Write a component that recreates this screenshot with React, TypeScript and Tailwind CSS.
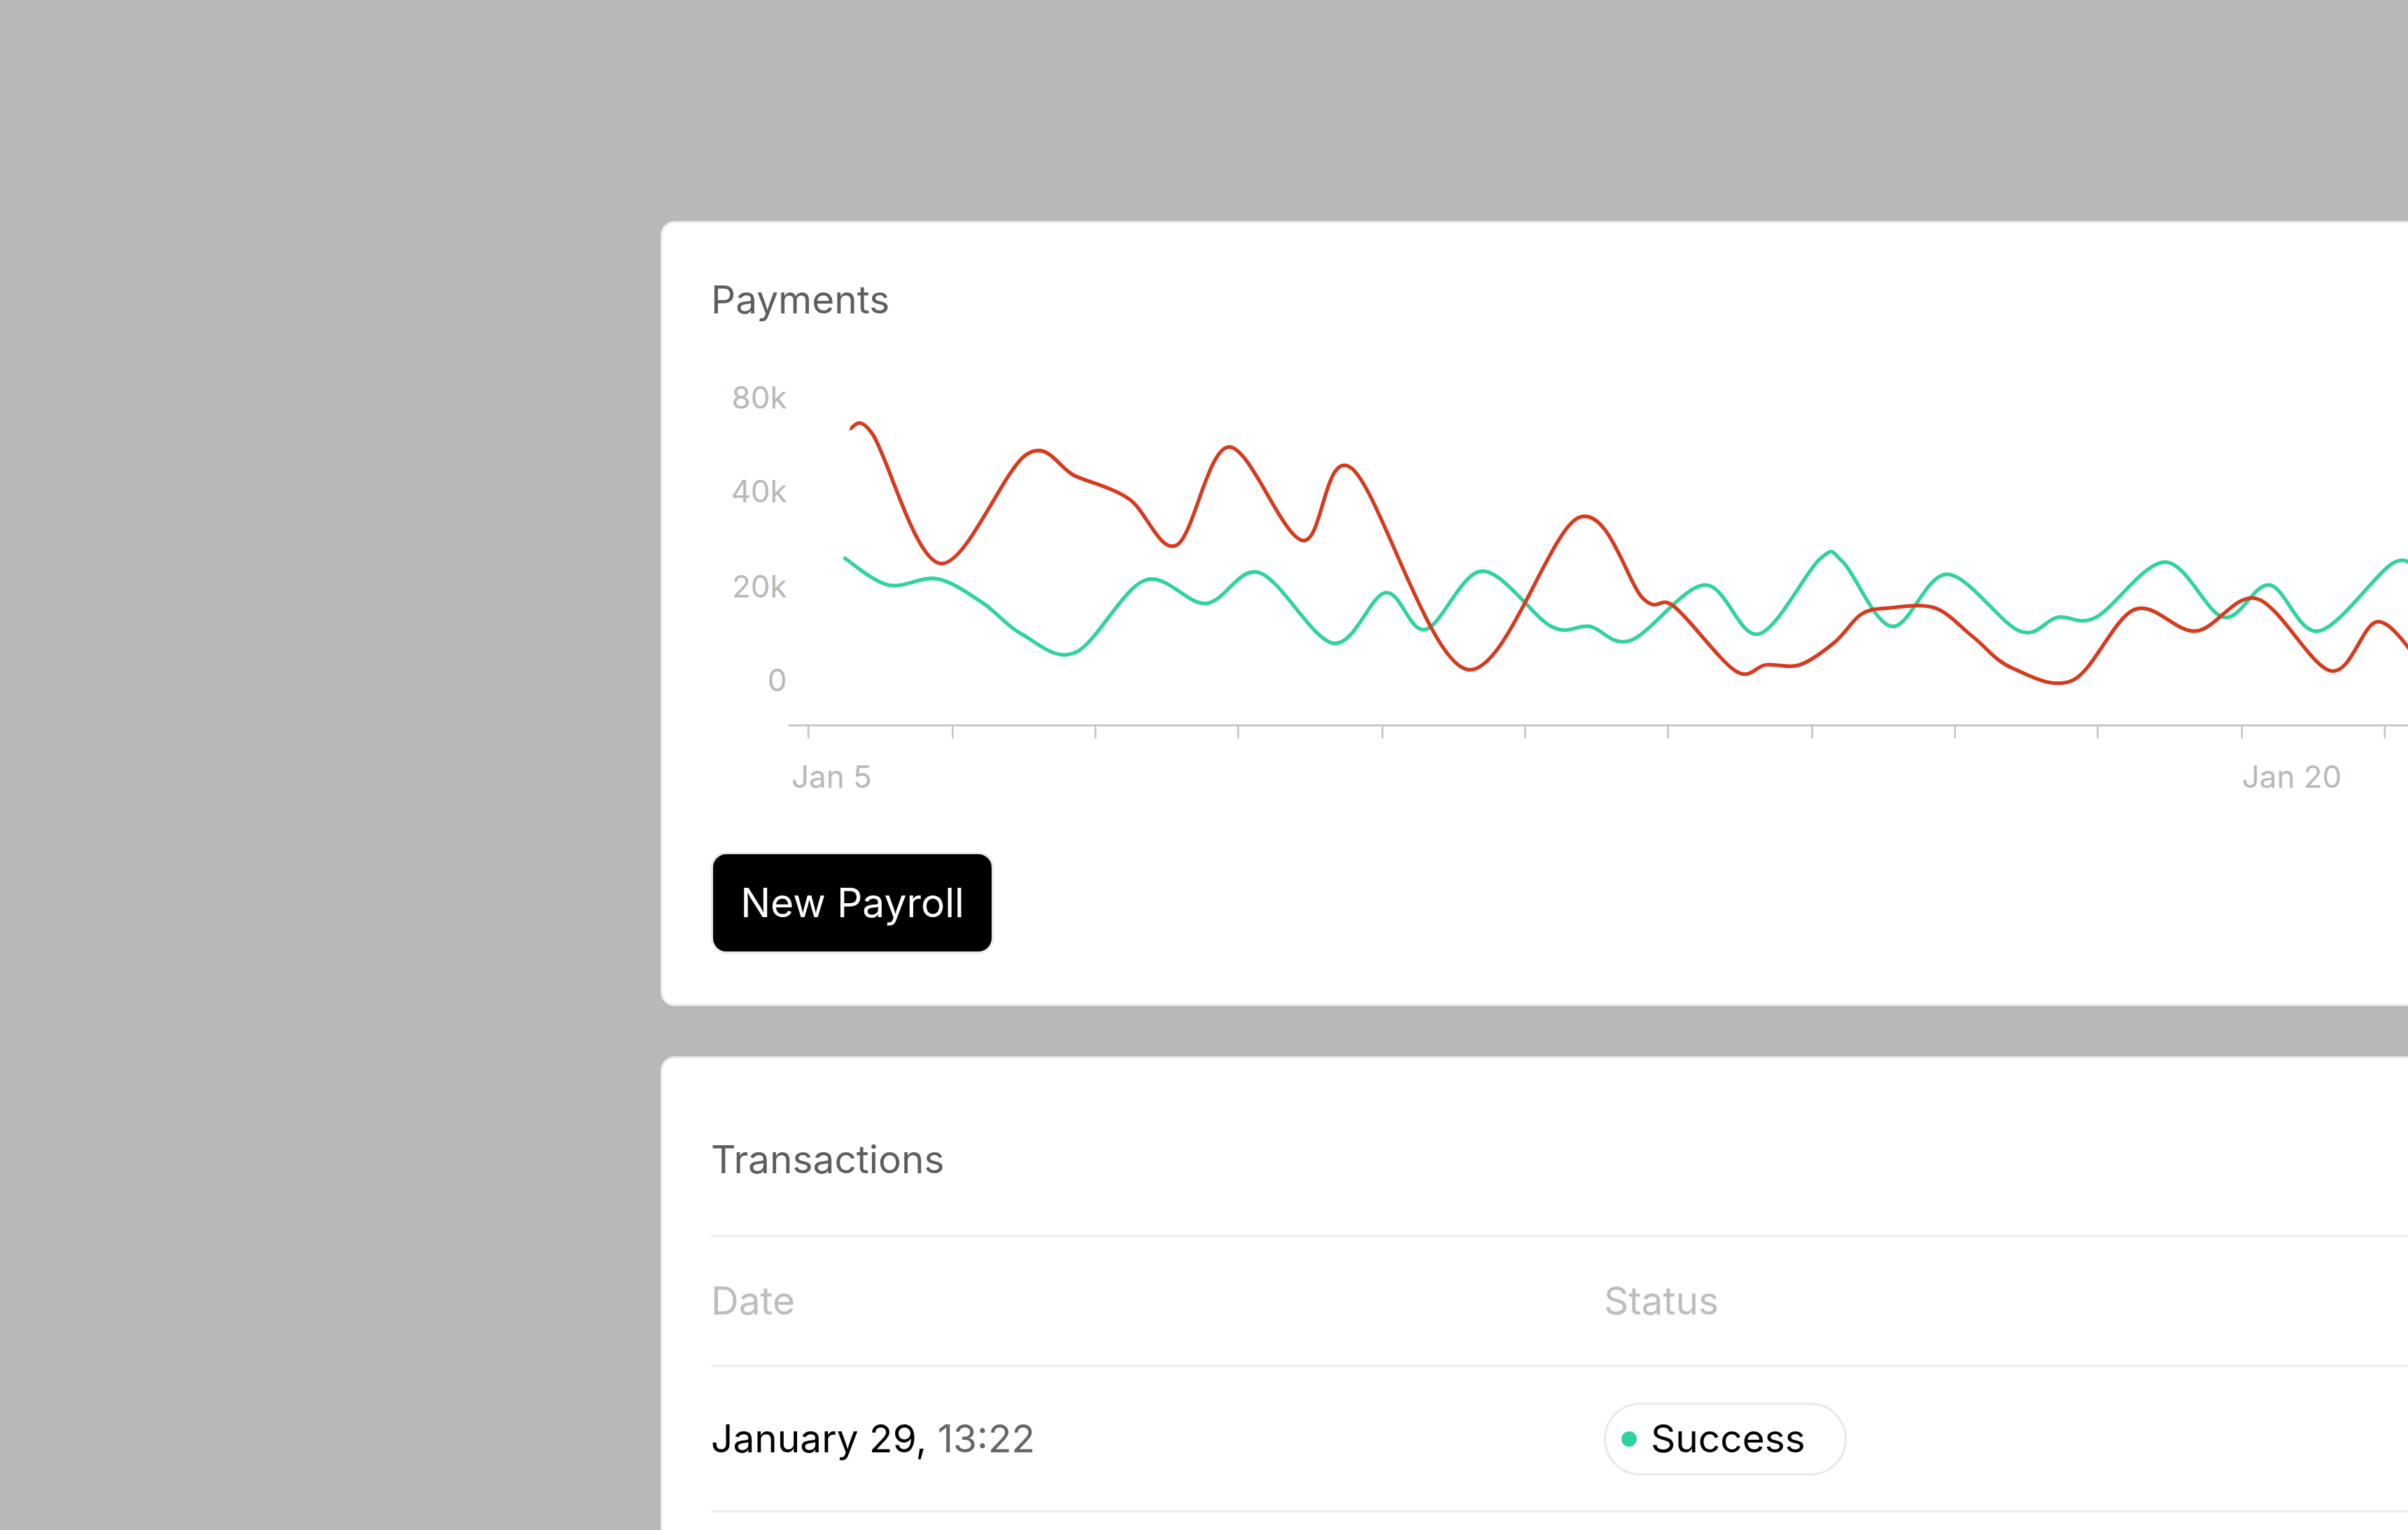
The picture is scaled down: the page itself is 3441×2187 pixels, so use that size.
const red: [number, number][] = [
  [553, 279], [568, 283], [612, 367], [668, 296], [700, 310], [735, 325], [766, 355], [800, 291],
  [848, 352], [880, 305], [955, 436], [1028, 337], [1070, 390], [1090, 395], [1130, 437], [1150, 433],
  [1172, 433], [1195, 418], [1212, 400], [1230, 396], [1260, 396], [1285, 415], [1310, 435], [1350, 443],
  [1390, 397], [1430, 411], [1470, 390], [1518, 437], [1548, 405], [1575, 430],
];

const green: [number, number][] = [
  [549, 363], [578, 381], [610, 377], [640, 393], [665, 413], [700, 425], [745, 378], [785, 393],
  [820, 373], [868, 419], [902, 386], [928, 410], [965, 372], [1010, 408], [1035, 408], [1062, 417],
  [1110, 381], [1145, 413], [1185, 364], [1200, 366], [1232, 408], [1268, 374], [1315, 411], [1340, 402],
  [1365, 402], [1410, 366], [1448, 402], [1478, 381], [1510, 411], [1558, 367], [1575, 372],
];

function smooth(pts: [number, number][]): string {
  let d = `M${pts[0][0]},${pts[0][1]}`;
  for (let i = 0; i < pts.length - 1; i++) {
    const p0 = pts[i - 1] || pts[i];
    const p1 = pts[i];
    const p2 = pts[i + 1];
    const p3 = pts[i + 2] || p2;
    const c1x = p1[0] + (p2[0] - p0[0]) / 6;
    const c1y = p1[1] + (p2[1] - p0[1]) / 6;
    const c2x = p2[0] - (p3[0] - p1[0]) / 6;
    const c2y = p2[1] - (p3[1] - p1[1]) / 6;
    d += ` C${c1x},${c1y} ${c2x},${c2y} ${p2[0]},${p2[1]}`;
  }
  return d;
}

const ticks = [526, 620, 713, 806, 900, 993, 1086, 1180, 1273, 1366, 1460, 1553];

function Chart() {
  return (
    <svg width={2634} height={658} viewBox="463 230 1200 300" className="block">
      <g fill="#b8b8b8" fontSize={20} textAnchor="end" fontFamily="Inter, sans-serif">
        <text x={512} y={266}>80k</text>
        <text x={512} y={327}>40k</text>
        <text x={512} y={389}>20k</text>
        <text x={512} y={450}>0</text>
      </g>
      <line x1={513} y1={472.5} x2={1663} y2={472.5} stroke="#c4c4c4" strokeWidth={1.2} />
      {ticks.map((t) => (
        <line key={t} x1={t} y1={472} x2={t} y2={481} stroke="#c4c4c4" strokeWidth={1.2} />
      ))}
      <g fill="#b8b8b8" fontSize={20} fontFamily="Inter, sans-serif">
        <text x={515} y={513}>Jan 5</text>
        <text x={1460} y={513}>Jan 20</text>
      </g>
      <path d={smooth(green)} fill="none" stroke="#2fd39e" strokeWidth={2.4} />
      <path d={smooth(red)} fill="none" stroke="#d63a1f" strokeWidth={2.4} />
    </svg>
  );
}

export default function App() {
  return (
    <div
      className="w-[3441px] h-[2187px] overflow-hidden bg-[#b8b8b8]"
      style={{ fontFamily: "Inter, 'Noto Sans', sans-serif" }}
    >
      <div className="ml-[944px] mt-[316px] w-[2700px] h-[1122px] bg-white rounded-[20px] border-[3px] border-[#ececec] pl-[69px] pt-[76px]">
        <div className="text-[55px] leading-[66px] text-[#5e5e5e]">Payments</div>
        <div className="mt-[44px]">
          <Chart />
        </div>
        <button className="mt-[55px] h-[145px] w-[404px] bg-black text-white text-[57px] rounded-[22px] border-[3px] border-[#e8e8e8]">
          New Payroll
        </button>
      </div>
      <div className="ml-[944px] mt-[72px] w-[2700px] h-[800px] bg-white rounded-[20px] border-[3px] border-[#ececec] pl-[69px] pt-[111px]">
        <div className="text-[55px] leading-[66px] text-[#5e5e5e]">Transactions</div>
        <div className="mt-[75px] border-t-[3px] border-[#ececec] h-[186px] flex items-center text-[55px] text-[#bdbdbd]">
          <div className="w-[1276px]">Date</div>
          <div>Status</div>
        </div>
        <div className="border-t-[3px] border-b-[3px] border-[#ececec] h-[211px] flex items-center text-[55px]">
          <div className="w-[1276px] text-black">
            January 29, <span className="text-[#666]">13:22</span>
          </div>
          <div className="h-[104px] w-[347px] rounded-full border-[3px] border-[#e8e8e8] flex items-center pl-[22px] gap-[20px] text-black">
            <span className="w-[22px] h-[22px] rounded-full bg-[#2fd39e]" />
            Success
          </div>
        </div>
      </div>
    </div>
  );
}
